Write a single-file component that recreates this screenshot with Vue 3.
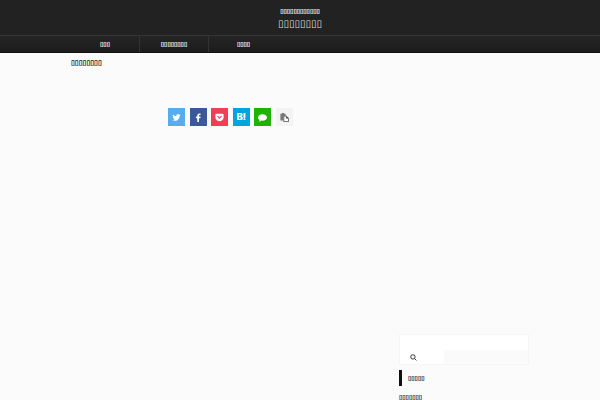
<script setup>
const navItems = ['▯▯▯', '▯▯▯▯▯▯▯▯', '▯▯▯▯']
</script>

<template>
  <div class="page">
    <header class="header">
      <div class="brand">
        <p class="tagline">▯▯▯▯▯▯▯▯▯▯▯▯</p>
        <a class="site-name" href="#">▯▯▯▯▯▯▯▯</a>
      </div>
      <nav class="nav">
        <ul class="container nav-list">
          <li v-for="item in navItems" :key="item"><a href="#">{{ item }}</a></li>
        </ul>
      </nav>
    </header>

    <div class="container content">
      <main class="main">
        <h1 class="title">▯▯▯▯▯▯▯▯</h1>
        <div class="share">
          <a class="twitter" href="#" aria-label="Twitter">
            <svg viewBox="0 0 24 24"><path d="M23 5.1a9 9 0 0 1-2.6.7 4.500 4.500 0 0 0 2-2.500 9 9 0 0 1-2.900 1.100 4.500 4.500 0 0 0-7.700 4.100A12.800 12.800 0 0 1 2.500 3.800a4.500 4.500 0 0 0 1.400 6 4.500 4.500 0 0 1-2-.6 4.500 4.500 0 0 0 3.600 4.500 4.500 4.500 0 0 1-2 .1 4.500 4.500 0 0 0 4.200 3.100A9 9 0 0 1 1 18.800a12.800 12.800 0 0 0 19.700-11.400A9 9 0 0 0 23 5.100Z" /></svg>
          </a>
          <a class="facebook" href="#" aria-label="Facebook">
            <svg viewBox="0 0 24 24"><path d="M17.500 1.200V5h-2.300c-1.700 0-2 .8-2 2v2.600h4.200l-.6 4.200h-3.600V24H8.800V13.800H5.200V9.600h3.600V6.500C8.800 3 11 1 14.200 1c1.500 0 2.800.1 3.300.2Z" /></svg>
          </a>
          <a class="pocket" href="#" aria-label="Pocket">
            <svg viewBox="0 0 24 24"><path fill-rule="evenodd" d="M3.500 2h17A2.500 2.500 0 0 1 23 4.500V11a11 11 0 0 1-22 0V4.500A2.500 2.500 0 0 1 3.500 2Zm3.800 5.600a1.600 1.600 0 0 0-1.100 2.700l4.700 4.500a1.600 1.600 0 0 0 2.200 0l4.700-4.500a1.600 1.600 0 0 0-2.200-2.300L12 11.500 8.400 8a1.600 1.600 0 0 0-1.100-.4Z" /></svg>
          </a>
          <a class="hatena" href="#" aria-label="Hatena Bookmark">B!</a>
          <a class="line" href="#" aria-label="LINE">
            <svg viewBox="0 0 24 24"><path d="M12 3.500c6.600 0 12 3.800 12 8.500s-5.400 8.500-12 8.500c-1 0-2-.1-3-.3-2 1.500-4.300 2.500-6.800 2.800 1.200-1.200 2-2.600 2.200-4.300C1.700 17.200 0 14.700 0 12c0-4.700 5.400-8.500 12-8.500Z" /></svg>
          </a>
          <button class="copy" type="button" aria-label="Copy">
            <svg viewBox="0 0 24 24"><path fill="#777" d="M1 2h4V0h6v2h4v5H9v13H1Z" /><path d="M10 8h7v6h6v9H10Z" fill="#fff" stroke="currentColor" stroke-width="2.400" /><path d="M17 7.500l6 6h-6Z" /></svg>
          </button>
        </div>
      </main>

      <aside class="side">
        <form class="search" @submit.prevent>
          <input type="text" aria-label="Search text" />
          <button type="submit" aria-label="Search">
            <svg viewBox="0 0 24 24"><circle cx="10" cy="10" r="7.500" /><path d="M15.500 15.500L22 22" /></svg>
          </button>
        </form>
        <h2 class="side-heading">▯▯▯▯▯</h2>
        <p class="side-text">▯▯▯▯▯▯▯</p>
      </aside>
    </div>
  </div>
</template>

<style>
body {
  background: #fbfbfb;
  overflow: hidden;
}
</style>

<style scoped>
.page {
  color: #111;
  font-family: "DejaVu Sans", sans-serif;
  font-size: 6px;
  font-weight: 700;
  line-height: 10px;
  text-shadow: 0 0 currentColor;
}

p, h1, h2, ul {
  margin: 0;
  padding: 0;
}

a {
  color: inherit;
  text-decoration: none;
}

.container {
  box-sizing: border-box;
  width: 100%;
  max-width: 458px;
  margin: 0 auto;
}

.header {
  background: #222;
  color: #fff;
}

.brand {
  display: flex;
  flex-direction: column;
  align-items: center;
  padding: 6px 0 3px;
}

.site-name {
  color: #ddd;
  font-size: 10px;
  font-weight: 400;
  line-height: 16px;
  text-shadow: none;
}

.nav {
  border-top: 1px solid #353535;
  background: linear-gradient(#252525, #1c1c1c);
  border-bottom: 1px solid #111;
}

.nav-list {
  display: flex;
  list-style: none;
}

.nav-list li {
  box-sizing: border-box;
  width: 69px;
  border-right: 1px solid #333;
  line-height: 16px;
  text-align: center;
}

.nav-list li:last-child {
  border-right: 0;
}

.nav-list a {
  display: block;
}

.content {
  display: grid;
  grid-template-columns: 1fr 130px;
  column-gap: 9px;
}

.main {
  padding-top: 5px;
}

.title {
  font-size: 7px;
  font-weight: 400;
  line-height: 10px;
}

.share {
  display: flex;
  justify-content: space-between;
  width: 125px;
  margin: 40px auto 0;
}

.share a,
.share button {
  display: flex;
  align-items: center;
  justify-content: center;
  box-sizing: border-box;
  width: 17px;
  height: 18px;
  padding: 0;
  border: 0;
  color: #fff;
}

.share svg {
  width: 9px;
  height: 9px;
  fill: currentColor;
}

.share .twitter { background: #55acee; }
.share .facebook { background: #3b5998; }
.share .pocket { background: #ef3f56; }
.share .hatena {
  background: #00a4de;
  font-family: Inter, sans-serif;
  font-size: 9px;
}
.share .line { background: #1eb300; }
.share .copy {
  background: #f3f3f3;
  color: #555;
}

.side {
  padding-top: 281px;
}

.search {
  border: 1px solid #f5f5f5;
  background: #fafafa;
}

.search input {
  display: block;
  box-sizing: border-box;
  width: 100%;
  height: 15px;
  padding: 0 4px;
  border: 0;
  background: #fff;
  font: inherit;
}

.search button {
  display: flex;
  align-items: center;
  box-sizing: border-box;
  width: 44px;
  height: 14px;
  padding: 0 10px;
  border: 0;
  background: #fff;
}

.search svg {
  width: 7px;
  height: 7px;
  fill: none;
  stroke: #222;
  stroke-width: 3;
}

.side-heading {
  margin-top: 5px;
  padding-left: 6px;
  border-left: 3px solid #111;
  font-size: 6px;
  line-height: 16px;
}

.side-text {
  margin-top: 6px;
}
</style>
